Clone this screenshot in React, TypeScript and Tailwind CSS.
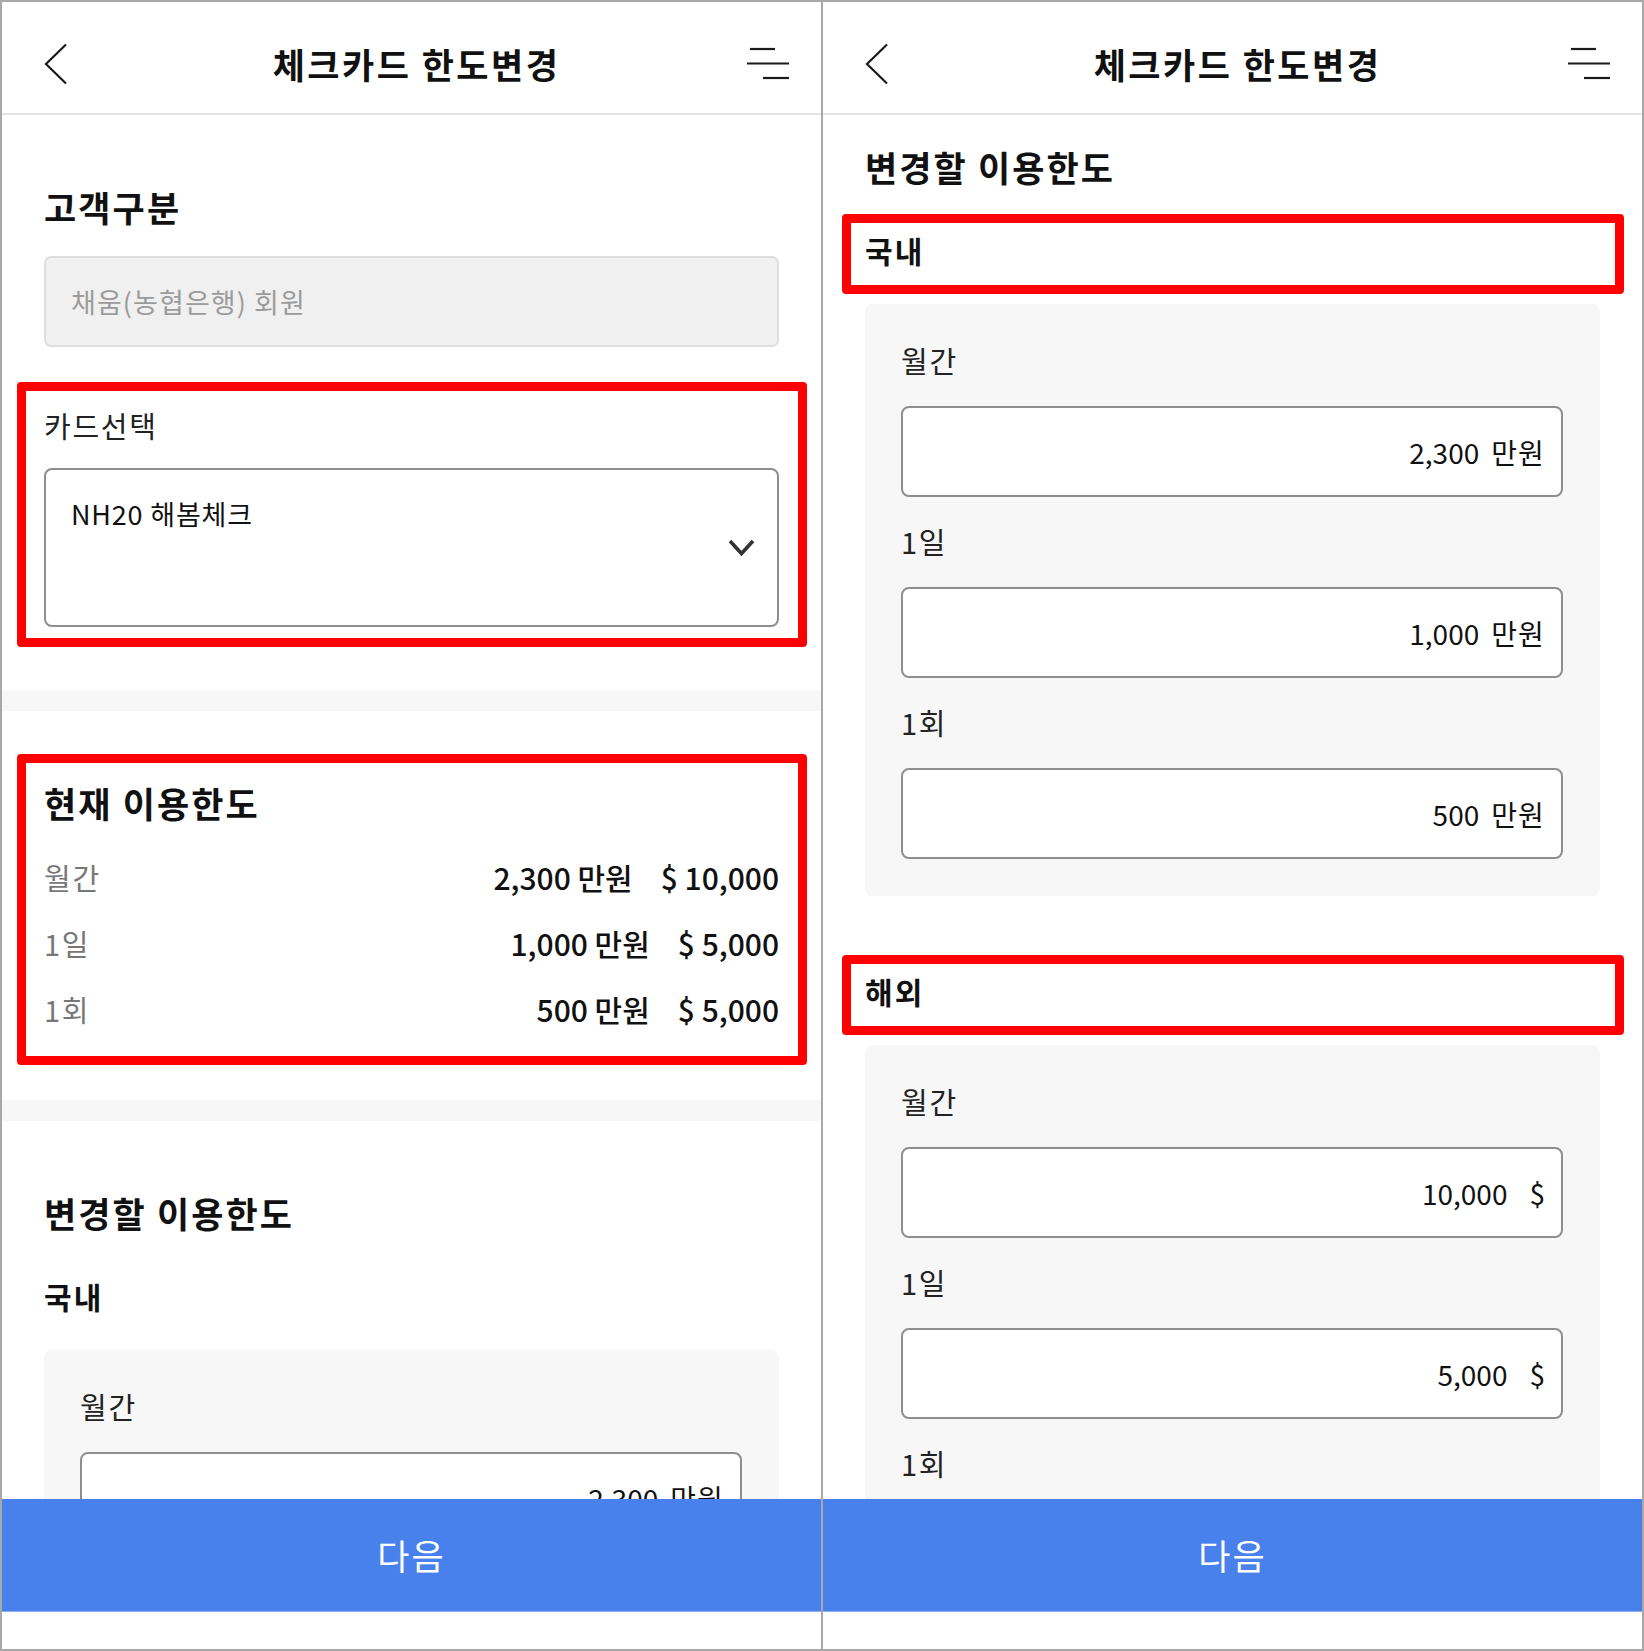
import React from "react";

function BackIcon() {
  return (
    <svg width="24" height="42" viewBox="0 0 24 42" fill="none">
      <polyline points="22,1.5 2,21 22,40.5" stroke="#1a1a1a" strokeWidth="2.2" strokeLinejoin="miter" />
    </svg>
  );
}

function MenuIcon() {
  return (
    <svg width="42" height="34" viewBox="0 0 42 34" fill="none">
      <line x1="3" y1="2" x2="28" y2="2" stroke="#1a1a1a" strokeWidth="2.2" />
      <line x1="0" y1="16.5" x2="42" y2="16.5" stroke="#1a1a1a" strokeWidth="2.2" />
      <line x1="16" y1="31" x2="42" y2="31" stroke="#1a1a1a" strokeWidth="2.2" />
    </svg>
  );
}

function ChevronDown() {
  return (
    <svg width="27" height="19" viewBox="0 0 27 19" fill="none">
      <polyline points="2,3 13.5,15.5 25,3" stroke="#333" strokeWidth="3.6" strokeLinejoin="miter" />
    </svg>
  );
}

function Header() {
  return (
    <div className="h-[113px] shrink-0 border-b-2 border-[#e3e3e3] pt-[12px] pl-[42px] pr-[32px] grid grid-cols-[1fr_auto_1fr] items-center">
      <div className="flex items-center">
        <BackIcon />
      </div>
      <div className="text-[35px] leading-[40px] font-bold tracking-[0.07em] text-[#111]">체크카드 한도변경</div>
      <div className="flex justify-end items-center">
        <MenuIcon />
      </div>
    </div>
  );
}

function Annot({ kind }: { kind: "card" | "current" | "heading" }) {
  if (kind === "card")
    return (
      <div className="pointer-events-none absolute -top-[26px] -bottom-[20px] -left-[27px] -right-[28px] border-[9px] border-[#ff0000] rounded-[4px]" />
    );
  if (kind === "current")
    return (
      <div className="pointer-events-none absolute -top-[29px] -bottom-[36px] -left-[27px] -right-[28px] border-[9px] border-[#ff0000] rounded-[4px]" />
    );
  return (
    <div className="pointer-events-none absolute -top-[18px] -bottom-[26px] -left-[23px] -right-[24px] border-[9px] border-[#ff0000] rounded-[4px]" />
  );
}

function LimitInput({ value, unit }: { value: string; unit: string }) {
  return (
    <div className="mt-[29px] h-[91px] rounded-[8px] border-2 border-[#8e8e8e] bg-white flex items-center justify-end pr-[16px] text-[28px] leading-[34px] text-[#111]">
      <span>{value}</span>
      {unit === "$" ? <span className="ml-[22px]">$</span> : <span className="ml-[12px] tracking-[0.04em]">{unit}</span>}
    </div>
  );
}

function FieldLabel({ text, first }: { text: string; first?: boolean }) {
  return (
    <div
      className={
        first
          ? "text-[29px] leading-[34px] tracking-[0.06em] text-[#222]"
          : "mt-[27px] text-[29px] leading-[34px] tracking-[0.06em] text-[#222]"
      }
    >
      {text}
    </div>
  );
}

function LimitCard({ rows }: { rows: { label: string; value: string; unit: string }[] }) {
  return (
    <div className="mt-[36px] rounded-[8px] bg-[#f7f7f7] pl-[36px] pr-[37px] pt-[39px] pb-[37px]">
      {rows.map((r, i) => (
        <div key={r.label}>
          <FieldLabel text={r.label} first={i === 0} />
          <LimitInput value={r.value} unit={r.unit} />
        </div>
      ))}
    </div>
  );
}

function SubHeading({ text, annotate }: { text: string; annotate: boolean }) {
  return (
    <div className="relative">
      {annotate && <Annot kind="heading" />}
      <div className="text-[30px] leading-[36px] font-bold tracking-[0.07em] text-[#111]">{text}</div>
    </div>
  );
}

const domestic = [
  { label: "월간", value: "2,300", unit: "만원" },
  { label: "1일", value: "1,000", unit: "만원" },
  { label: "1회", value: "500", unit: "만원" },
];
const overseas = [
  { label: "월간", value: "10,000", unit: "$" },
  { label: "1일", value: "5,000", unit: "$" },
  { label: "1회", value: "5,000", unit: "$" },
];

function ChangeSection({ annotate, pt }: { annotate: boolean; pt: "left" | "right" }) {
  return (
    <div className={pt === "left" ? "px-[42px] pt-[72px]" : "px-[42px] pt-[32px]"}>
      <h2 className="text-[35px] leading-[40px] font-bold tracking-[0.06em] text-[#111]">변경할 이용한도</h2>
      <div className="mt-[45px]">
        <SubHeading text="국내" annotate={annotate} />
      </div>
      <LimitCard rows={domestic} />
      <div className="mt-[77px]">
        <SubHeading text="해외" annotate={annotate} />
      </div>
      <LimitCard rows={overseas} />
      <div className="h-[120px]" />
    </div>
  );
}

function CurrentRow({ label, won, usd }: { label: string; won: string; usd: string }) {
  return (
    <div className="flex items-center justify-between leading-[40px]">
      <span className="text-[29px] tracking-[0.06em] text-[#777]">{label}</span>
      <div className="flex gap-[28px] text-[30px] font-medium text-[#111]">
        <span>{won} 만원</span>
        <span>$ {usd}</span>
      </div>
    </div>
  );
}

function LeftContent() {
  return (
    <div>
      <div className="px-[42px] pt-[72px] pb-[63px]">
        <h2 className="text-[35px] leading-[40px] font-bold tracking-[0.06em] text-[#111]">고객구분</h2>
        <div className="mt-[29px] h-[91px] rounded-[7px] border-2 border-[#dedede] bg-[#f0f0f0] flex items-center px-[25px] text-[27px] leading-[34px] tracking-[0.04em] text-[#9b9b9b]">
          채움(농협은행) 회원
        </div>
        <div className="relative mt-[61px]">
          <Annot kind="card" />
          <div className="text-[29px] leading-[34px] tracking-[0.06em] text-[#222]">카드선택</div>
          <div className="mt-[26px] h-[159px] rounded-[8px] border-2 border-[#8e8e8e] bg-white flex justify-between pl-[25px] pr-[22px] pt-[27px]">
            <div className="text-[27px] leading-[34px] tracking-[0.03em] text-[#111]">NH20 해봄체크</div>
            <div className="self-center -mt-[27px]">
              <ChevronDown />
            </div>
          </div>
        </div>
      </div>
      <div className="h-[21px] bg-[#f7f7f7]" />
      <div className="px-[42px] pt-[72px] pb-[71px]">
        <div className="relative">
          <Annot kind="current" />
          <h2 className="text-[35px] leading-[40px] font-bold tracking-[0.06em] text-[#111]">현재 이용한도</h2>
          <div className="mt-[34px] flex flex-col gap-[26px]">
            <CurrentRow label="월간" won="2,300" usd="10,000" />
            <CurrentRow label="1일" won="1,000" usd="5,000" />
            <CurrentRow label="1회" won="500" usd="5,000" />
          </div>
        </div>
      </div>
      <div className="h-[21px] bg-[#f7f7f7]" />
      <ChangeSection annotate={false} pt="left" />
    </div>
  );
}

function Phone({ side }: { side: "left" | "right" }) {
  return (
    <div className="flex-1 min-w-0 h-full flex flex-col bg-white">
      <Header />
      <div className="flex-1 min-h-0 overflow-hidden">
        {side === "left" ? <LeftContent /> : <ChangeSection annotate={true} pt="right" />}
      </div>
      <div className="h-[113px] shrink-0 bg-[#4881ec] border-b border-[#8db0f2] flex items-center justify-center text-[35px] leading-[40px] tracking-[0.06em] text-white">
        다음
      </div>
      <div className="h-[37px] shrink-0 bg-white" />
    </div>
  );
}

export default function App() {
  return (
    <div className="w-[1644px] h-[1651px] border-2 border-[#a8a8a8] flex bg-white font-['Noto_Sans_CJK_KR',sans-serif]">
      <Phone side="left" />
      <div className="w-[2px] shrink-0 bg-[#a8a8a8]" />
      <Phone side="right" />
    </div>
  );
}
